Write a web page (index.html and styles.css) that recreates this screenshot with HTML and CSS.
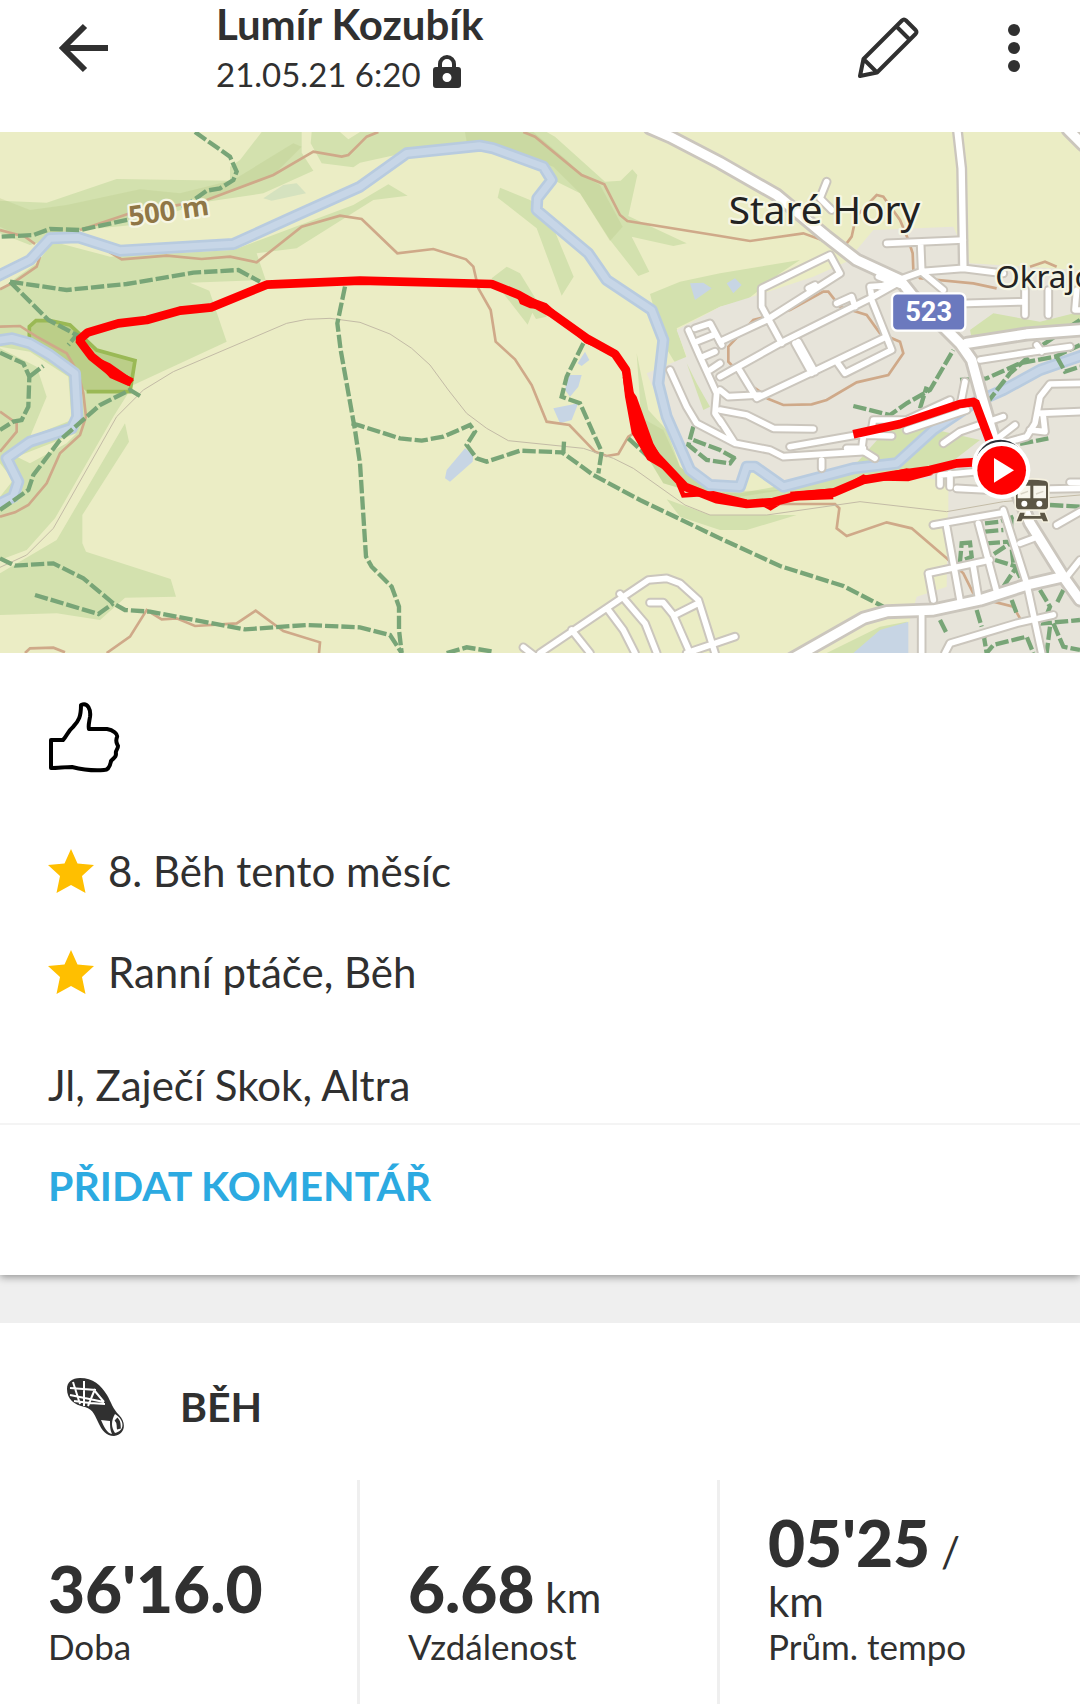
FILE: index.html
```
<!DOCTYPE html>
<html lang="cs">
<head>
    <meta charset="UTF-8">
    <meta name="viewport" content="width=device-width, initial-scale=1.0">
    <title>Lumír Kozubík - Běh</title>
    <link rel="stylesheet" href="styles.css">
</head>
<body>
    <header class="topbar">
        <button class="icon-button" type="button" aria-label="Zpět">
            <svg width="50" height="50" viewBox="0 0 50 50"><path d="M26 3 4 25l22 22M4 25h45" fill="none" stroke="#303030" stroke-width="6"/></svg>
        </button>
        <div class="title">
            <h1>Lumír Kozubík</h1>
            <p>
                21.05.21 6:20
                <svg width="28" height="33" viewBox="0 0 28 33"><path d="M7 14V9a7 7 0 0 1 14 0v5" fill="none" stroke="#303030" stroke-width="4"/><path fill="#303030" fill-rule="evenodd" d="M3 12h22a3 3 0 0 1 3 3v15a3 3 0 0 1-3 3H3a3 3 0 0 1-3-3V15a3 3 0 0 1 3-3zm11 6a4.500 4.500 0 1 0 0 9 4.500 4.500 0 0 0 0-9z"/></svg>
            </p>
        </div>
        <button class="icon-button edit" type="button" aria-label="Upravit">
            <svg width="62" height="62" viewBox="0 0 62 62" fill="none" stroke="#303030" stroke-width="4" stroke-linejoin="round"><path d="M3 59 6.500 42 45 3.500q2-2 4 0L58.500 13q2 2 0 4L20 55.500zM6.500 42 20 55.500M39.500 9.500 52.500 22.500"/></svg>
        </button>
        <button class="icon-button" type="button" aria-label="Další možnosti">
            <svg width="12" height="48" viewBox="0 0 12 48" fill="#303030"><circle cx="6" cy="6" r="6"/><circle cx="6" cy="24" r="6"/><circle cx="6" cy="42" r="6"/></svg>
        </button>
    </header>

    <main>
        <section class="card">
            <svg class="map" viewBox="0 6 3240 1563" role="img" aria-label="Mapa trasy">
                <defs>
                    <g id="roads-minor">
                        <path d="M2660 340 2890 330M2762 345 2765 420M2640 470 2765 425 2890 415 3010 430M2770 430 2830 480M2900 520 3075 515M3075 480V555M3145 480V555M3230 480 3225 540H3240M2480 155 2460 205 2495 240"/>
                        <path d="M2160 635 2300 570 2520 430 2490 375 2285 475 2285 530 2345 640M2160 740 2340 640 2620 500 2700 455M2425 475 2445 465M2615 510 2675 660 2535 730 2510 695M2385 640 2435 730M2395 635 2445 725M2215 715 2270 805 2440 725 2655 622M2510 520 2555 500 2565 530M2615 500 2610 470 2680 465M2635 440 2700 465"/>
                        <path d="M2065 600 2100 680 2150 790M2085 595 2130 580 2165 645M2090 635 2140 615M2110 680 2145 665M2130 720 2160 700M2010 720 2060 830 2090 880 2205 940 2310 960 2350 980 2590 965M2160 840 2240 855 2320 895 2440 897M2160 870 2205 940M2150 790 2145 850 2165 880M2160 780 2185 800 2280 795"/>
                        <path d="M2370 950 2570 915 2675 918M2590 920 2585 960 2625 985M2540 955H2590M2615 900 2620 870 2720 870 2850 810M2720 900 2900 840M2465 990V1015M2895 755 2880 830M2940 690 3100 665 3210 650M3110 645 3125 665M2830 940 2880 905 3010 860M2960 950 3045 885M3010 940 3080 920 3105 880 3120 800 3150 762 3240 760M3115 850 3240 845M3090 900 3135 905 3130 860M2820 1065 2820 1035 2930 1025M2850 1070V1030M2870 1075 2960 1080M3210 1057H3240M3150 1077 3240 1075M3170 1185 3240 1145"/>
                        <path d="M2800 1185 3000 1150M2840 1190 2880 1410M2935 1180 2990 1385M3010 1140 3080 1360 3125 1569M2800 1410 2785 1330 2970 1290M2920 1310 2935 1400M3060 1240 3100 1225M2765 1450V1569M2835 1569 2850 1540 3050 1480 3160 1455M3200 1340 3240 1290"/>
                        <path d="M1620 1569 1945 1350 2000 1345 2040 1360 2095 1410 2145 1569M1570 1552 1600 1575M1715 1500 1770 1569M1825 1440 1870 1500 1905 1569M1860 1392 1935 1480 1970 1569M1950 1418H1990L2020 1455 2070 1569M2025 1455 2095 1420M2060 1569 2205 1520"/>
                    </g>
                    <g id="roads-major">
                        <path d="M1950-6 2010 20 2160 98 2330 195 2480 320 2570 390 2700 450 2740 500 2880 640 2915 690 2945 800 2980 920 3090 1180 3190 1340 3240 1410M2900 640 3080 612 3240 600M2370 1590 2590 1465 2660 1445 2800 1440 2940 1410 3080 1365 3190 1340M3205 0 3250 45"/>
                    </g>
                    <path id="road-north" d="M2872 0 2885 115 2890 405"/>
                    <path id="river" d="M-10 440 90 390 150 325 235 322 360 362 700 342 870 265 1080 170 1220 70 1440 47 1480 55 1630 110 1655 150 1612 205 1610 240 1765 370 1820 450 1955 540 1990 630 1975 760 2000 860 2070 1020 2130 1065 2220 1070 2240 1010 2265 1010 2350 1070 2560 1015 2690 1000 2800 900 2920 820 3010 780 3120 720 3250 675M-10 632 35 625 90 640 150 675 225 730 232 860 215 895 90 935 20 985 55 1055 40 1100-10 1125"/>
                </defs>

                <rect y="0" width="3240" height="1575" fill="#ebedc5"/>

                <!-- forests -->
                <g fill="#d3e1ae">
                    <path d="M0 212 140 218 350 147 690 152 690 110 720 90 785 6H905V68L940 122 790 190 620 215 400 285 240 300 90 345 0 310z"/>
                    <path d="M935 6H1020L1045 28 1080 6H1640L1665 20 1815 155 1862 152 1897 118 1912 135 1885 258 2060 340 2020 348 1895 320 1948 425 1915 438 1830 330 1740 190 1660 150 1560 80 1440 40 1210 70 1080 98 1060 112 965 100 932 40z"/>
                    <path d="M0 478 110 400 160 335 330 380 700 360 940 270 1060 225 1165 163 1223 197 1120 210 890 355 770 370 797 450 570 458 628 482 680 635 400 765 340 860 165 1165 80 1260 0 1290z"/>
                    <path d="M375 880 387 935 247 1155V1240L258 1265 512 1347 528 1400 375 1403 300 1470 170 1450 0 1455V1330L170 1230z"/>
                    <path d="M1500 173 1590 210 1640 245 1721 440 1685 497 1610 295 1493 203zM1475 445 1520 410 1560 430 1640 560 1608 567 1597 548 1583 584z"/>
                    <path d="M1950 492 2040 455 2160 430 2400 390 2340 430 2240 510 2160 530 2030 595 2065 700 2130 820 2110 820 2020 690 1990 640z"/>
                    <path d="M1910 670 1945 840 2000 900 2040 1010 2130 1085 2220 1090 2640 1010 2650 940 2800 900 2940 950 2940 990 2600 1060 2350 1110 2160 1110 1990 1060 1930 960zM2000 1108 2130 1155 2390 1155 2240 1200 2160 1200 2040 1160z"/>
                    <path d="M2480 1569 2640 1490 2720 1475V1569z"/>
                </g>
                <g fill="#b9cc8b" fill-opacity=".35">
                    <path d="M0 205 90 240 200 225 420 178 540 190 700 150 880 40 905 50 820 135 620 210 240 300 60 318 0 290z"/>
                    <path d="M1395 6H1600L1700 90 1745 135 1800 165 1868 290 1830 333 1740 190 1660 110 1560 75 1400 35z"/>
                    <path d="M1900 850 1990 900 2040 1010 2130 1085 2350 1080 2160 1110 1990 1060 1930 960z"/>
                </g>
                <path d="M0 650 90 665 205 740 215 870 90 920 140 800 110 710 60 685 0 655zM0 1000 40 1050 0 1100zM50 980 230 910 200 940 90 1000z" fill="#ebedc5"/>

                <!-- built-up area -->
                <path d="M2030 600 2160 530 2290 490 2440 440 2540 395 2620 300 2860 290 2910 400 3240 420V1569H2700L2750 1400 2840 1370 2845 1050 2660 1040 2690 930 2560 1000 2350 1060 2250 1010 2220 1060 2130 1060 2040 960 1940 730 2060 680z" fill="#e7e4da"/>
                <g fill="#d3e1ae">
                    <path d="M2915 625 2910 600 2980 550 3120 575 3240 545V590L3080 600zM2330 1060 2640 990 2660 930 2810 900 2940 930 2850 1000 2580 1050zM2640 920 2800 830 2860 850 2700 990 2560 1010z"/>
                    <path d="M2060 700 2110 840 2130 830 2090 760z"/>
                </g>
                <path d="M2330 1115 2560 1060 2845 1050V1150L2580 1118z" fill="#ebedc5"/>
                <path d="M2560 1569 2640 1500 2725 1475V1569zM2070 460 2110 458 2135 475 2085 510zM2180 460 2205 445 2225 465 2200 490zM1755 665 1768 690 1745 708 1733 700zM1705 735 1745 735 1735 770 1710 800 1695 780zM1660 835 1735 820 1715 870 1680 880zM1395 955 1420 975 1418 995 1350 1055 1335 1045 1340 1020z" fill="#c7d5e4"/>
                <path d="M790 205 850 165 890 160 918 190 815 212z" fill="#c7dabb" fill-opacity=".6"/>
                <path d="M88 630V590L108 572H150L210 585 290 660 405 692 390 785H260" fill="#a4bb62" fill-opacity=".5" stroke="#9ab955" stroke-width="11"/>

                <!-- contour lines -->
                <g fill="none" stroke="#cfa989" stroke-width="8">
                    <path d="M0 300 75 320 105 342M120 380 110 410 45 455 0 478M240 300 390 250 620 210 820 135 940 65 1025 80 1045 75 1080 40 1100 20 1135 6"/>
                    <path d="M250 320 365 388 500 377 605 387 690 380 770 397 905 290 1020 257 1085 267 1192 370 1300 357 1398 388 1420 410 1435 475 1472 540 1487 635 1545 688 1595 765 1640 875 1708 885 1785 965 1820 978 1855 972 1885 920 1905 908"/>
                    <path d="M0 590 60 588 110 620 200 670 235 730 250 790 258 860 240 915 180 970 140 1060 85 1125 45 1147 0 1160M0 845 50 880V905L0 965M75 1569 90 1555 160 1553 195 1567M320 1569 390 1520 440 1440 485 1468 530 1465 585 1488 710 1480 767 1442 850 1503 960 1537 957 1569"/>
                    <path d="M1570 6 1605 20 1745 135 1813 163 1860 255 1882 273 2160 318 2250 333 2410 310 2480 335 2540 340 2555 320 2568 260 2630 195 2650 200 2700 270 2725 330 2738 370 2740 420 2760 445 2920 460 2990 475M3090 410 3135 395 3170 410"/>
                    <path d="M2295 795 2230 750 2210 720 2185 695V650L2260 570 2370 540 2470 485H2485L2520 530 2600 555 2640 610 2700 635 2710 670 2665 735 2570 757 2480 810 2435 823 2350 825 2300 805"/>
                    <path d="M2300 1122H2505L2518 1135 2510 1195 2540 1218 2660 1177 2735 1195 2840 1285 2890 1330 2920 1390M2980 1415 3040 1430 3060 1465M2840 1569 2870 1530 2960 1520"/>
                </g>

                <use href="#river" fill="none" stroke="#b8cbdf" stroke-width="36" stroke-linejoin="round"/>
                <use href="#river" fill="none" stroke="#c7d6e7" stroke-width="20" stroke-linejoin="round"/>
                <path d="M0 1312 80 1275 160 1195 350 860 430 780 520 725 860 580 920 568 990 565 1080 577 1170 612 1235 655 1290 705 1345 780 1400 850 1460 895 1525 932 1750 955 1840 985 1900 1015 2055 1125 2130 1155 2300 1155 2580 1115 2840 1145 3010 1115 3240 1095" fill="none" stroke="#c3bba6" stroke-width="3"/>

                <!-- forest paths -->
                <g fill="none" stroke="#78a577" stroke-width="13" stroke-dasharray="40 9">
                    <path d="M585 6 690 80 710 125 700 150 660 175 620 182 540 240M5 320 100 315 150 297 240 300 390 268M30 455 200 480 380 462 580 428 715 420 780 455M30 455 145 570 230 615 205 645M0 668 70 700 88 740 85 830 65 870 40 875 0 900M88 740 130 708"/>
                    <path d="M420 798 390 780 300 825 180 930 100 1035 85 1080 0 1140M1035 470 1012 580 1022 660 1065 900 1080 1000 1098 1280 1115 1310 1175 1370 1197 1430V1500L1205 1569"/>
                    <path d="M1055 880 1080 887 1200 925 1265 932 1330 920 1410 885 1425 905 1400 945 1430 985 1460 995 1560 962 1685 967M1692 935 1690 970 1780 1035 1920 1110 2160 1225 2340 1308 2530 1368 2650 1430M1750 640 1700 740 1685 800 1740 820 1805 965 1795 1030"/>
                    <path d="M0 1285 45 1307 160 1300 250 1345 340 1420 375 1440 450 1445 735 1498 920 1485 1080 1492 1170 1515 1205 1569M105 1395 295 1452 340 1420M1340 1569 1400 1552 1480 1565M1885 925 1950 985"/>
                    <path d="M2080 890 2065 945 2120 990 2190 1000 2205 980M2080 930 2160 960 2205 985M2560 828 2670 855 2720 820 2790 780 2860 660M2760 835 2780 770M2880 750 2960 745 3060 700 3165 680 3240 645M2960 820 3030 730 3120 650 3240 570M3170 680 3195 725 3240 710M3060 942 3145 925M3150 1125 3240 1130"/>
                    <path d="M2955 1180 3000 1175 3040 1160M2885 1240 2910 1238 2915 1280 2880 1295zM2955 1205 3010 1200M2960 1240 3030 1235M2985 1290 3050 1310 3010 1370M3035 1160 3030 1240 2970 1280M3030 1210 3040 1300 3065 1350M2820 1470 2840 1510M2930 1440 2945 1490M3035 1410 3050 1450M2950 1510 2960 1569 2980 1545 3080 1520 3100 1569M3120 1380 3150 1430 3130 1480 3240 1470M3190 1380 3170 1420M3160 1480 3190 1550 3240 1560M3150 1490 3140 1569M3180 1180 3210 1160"/>
                </g>

                <!-- roads, casing first -->
                <g fill="none" stroke="#cbc6bd" stroke-linecap="round" stroke-linejoin="round">
                    <use href="#roads-minor" stroke-width="29"/>
                    <use href="#road-north" stroke-width="33"/>
                    <use href="#roads-major" stroke-width="45"/>
                </g>
                <g fill="none" stroke="#fff" stroke-linecap="round" stroke-linejoin="round">
                    <use href="#roads-minor" stroke-width="17"/>
                    <use href="#road-north" stroke-width="19"/>
                    <use href="#roads-major" stroke-width="28"/>
                </g>

                <!-- labels -->
                <g class="map-label">
                    <text class="height" transform="translate(390 288) rotate(-8)">500 m</text>
                    <text class="town" x="2186" y="283">Staré Hory</text>
                    <text class="suburb" x="2986" y="473">Okrajová</text>
                </g>
                <rect x="2676" y="490" width="220" height="112" rx="16" fill="#6b79be" stroke="#fff" stroke-width="7"/>
                <text class="road-number" x="2786" y="573">523</text>

                <!-- station -->
                <g fill="#5c5645">
                    <path d="M3048 1064q0-10 10-12 38-6 76 0 10 2 10 12v64q0 10-10 10h-76q-10 0-10-10z" stroke="#f4f0df" stroke-width="10" paint-order="stroke"/>
                    <path d="M3060 1148h14l-2 10h50l-2-10h14l10 26h-14l-4-8h-58l-4 8h-14z" stroke="#f4f0df" stroke-width="8" paint-order="stroke"/>
                    <path d="M3053 1067h38v38h-38zM3100 1067h38v38h-38z" fill="#f8f6ec"/>
                    <path d="M3062 1092 3084 1084M3108 1092 3130 1084" stroke="#d8d4c6" stroke-width="4"/>
                    <circle cx="3073" cy="1121" r="9" fill="#fff"/><circle cx="3118" cy="1121" r="9" fill="#fff"/>
                </g>

                <!-- recorded track -->
                <g fill="none" stroke="#f00" stroke-width="26" stroke-linejoin="bevel">
                    <path d="M395 757 335 728 275 680 237 630 262 608 355 580 440 570 540 542 635 532 800 464 1080 452 1475 462 1555 494 1655 550 1760 625 1845 672 1878 720 1890 800 1920 910 1970 980 2055 1070 2150 1108 2240 1122 2320 1116 2390 1098 2500 1088 2590 1050 2680 1035 2790 1020 2870 1000 2950 995"/>
                    <path d="M2560 913 2700 882 2880 822 2925 815 2968 930"/>
                </g>
                <path d="M265 670 330 744 385 768 402 750 330 700zM350 572 440 563 540 530 640 525 650 538 540 552 450 577 350 587zM1545 485 1560 522 1590 535 1665 542 1640 520zM1690 580 1755 640 1840 672 1750 605zM1868 740 1875 800 1895 910 1942 990 2010 1030 1960 940 1910 800zM2290 1130 2312 1142 2340 1125zM2370 1085 2500 1075 2500 1108 2380 1112zM2560 1050 2590 1033 2640 1052 2725 1054 2800 1034 2720 1015z" fill="#f00"/>
                <path d="M2035 1060 2050 1096 2140 1090 2240 1115" fill="none" stroke="#f00" stroke-width="14"/>

                <circle cx="2998" cy="1006" r="82" fill="#fff"/>
                <circle cx="3001" cy="1003" r="74" fill="#2c3038"/>
                <circle cx="3005" cy="1021" r="86" fill="#fff"/>
                <circle cx="3005" cy="1021" r="73" fill="#f00"/>
                <path d="M2982 984v74l60-37z" fill="#fff"/>
            </svg>

            <div class="summary">
                <button class="like" type="button" aria-label="To se mi líbí">
                    <svg width="72" height="72" viewBox="0 0 72 72"><path d="M3 39h12c4-4 5-9 10-13 6-6 8-11 8-22 7-3 10 5 9 12-1 6-2 9-1 12h18c6 1 11 5 10 8-2 5 0 6 1 9 0 4-3 4-2 8 0 4-4 5-5 7-1 6-4 9-7 9-12 1-24-1-32-3-7 0-14 1-21 1z" fill="none" stroke="#000" stroke-width="4" stroke-linejoin="round"/></svg>
                </button>
                <ul class="awards">
                    <li>
                        <svg width="46" height="44" viewBox="0 0 46 44"><path d="M23 0l6.500 14.500L46 16 34 27l3.500 17L23 36 8.500 44 12 27 0 16l16.500-1.500z" fill="#ffbf00"/></svg>
                        8. Běh tento měsíc
                    </li>
                    <li>
                        <svg width="46" height="44" viewBox="0 0 46 44"><path d="M23 0l6.500 14.500L46 16 34 27l3.500 17L23 36 8.500 44 12 27 0 16l16.500-1.500z" fill="#ffbf00"/></svg>
                        Ranní ptáče, Běh
                    </li>
                </ul>
                <p class="note">Jl, Zaječí Skok, Altra</p>
            </div>
            <div class="comment">
                <button type="button">PŘIDAT KOMENTÁŘ</button>
            </div>
        </section>

        <section class="activity">
            <div class="activity-head">
                <svg width="60" height="60" viewBox="0 0 60 60">
                    <path d="M1 12C1 5 6 1 14 1c13 0 21 7 27 17 4 7 6 14 12 20 8 8 6 20-5 21-8 0-12-6-15-12-4-8-5-14-14-17C8 28 1 22 1 12z" fill="#303030"/>
                    <path d="M7 5l7 22M18 4v25M4 11l26 2M4 18l34 7M29 12l-7 17M28 13l10 12M8 24l16 2 15 1" fill="none" stroke="#fff" stroke-width="2"/>
                    <path d="M35 43l9 1c0 5 0 9 2 13-5-1-8-7-11-14zM49 37c10 6 10 17 0 19-4-6-4-12 0-19z" fill="#fff"/>
                    <path d="M50 42c4 4 2 6 3 10" fill="none" stroke="#303030" stroke-width="4"/>
                </svg>
                <h2>BĚH</h2>
            </div>
            <dl class="stats">
                <div class="stat">
                    <dd><strong>36'16.0</strong></dd>
                    <dt>Doba</dt>
                </div>
                <div class="stat">
                    <dd><strong>6.68</strong> km</dd>
                    <dt>Vzdálenost</dt>
                </div>
                <div class="stat">
                    <dd><strong>05'25</strong> / km</dd>
                    <dt>Prům. tempo</dt>
                </div>
            </dl>
        </section>
    </main>
</body>
</html>
```
FILE: styles.css
```
* {
    box-sizing: border-box;
}
body {
    margin: 0;
    min-height: 100vh;
    display: flex;
    flex-direction: column;
    font-family: Lato, "Open Sans", sans-serif;
    font-size: 42px;
    color: #303030;
    background-color: #efefef;
}
h1, h2, p, ul, dl, dd {
    margin: 0;
    padding: 0;
}
button {
    padding: 0;
    border: none;
    background: none;
    font-family: inherit;
    cursor: pointer;
}
svg {
    display: block;
    flex: none;
}
main {
    flex: 1;
    display: flex;
    flex-direction: column;
}
.topbar {
    position: relative;
    z-index: 1;
    display: flex;
    align-items: flex-start;
    height: 132px;
    padding: 0 60px 0 48px;
    background-color: #fff;
}
.icon-button {
    display: flex;
    align-items: center;
    justify-content: center;
    height: 96px;
    min-width: 72px;
}
.icon-button:last-child {
    min-width: 12px;
}
.edit {
    margin-right: 84px;
}
.title {
    flex: 1;
    margin-left: 96px;
}
.title h1 {
    font-size: 42px;
    line-height: 48px;
}
.title p {
    display: flex;
    align-items: center;
    gap: 12px;
    font-size: 33px;
    line-height: 52px;
}
.title svg {
    margin-bottom: 6px;
}
.card {
    background-color: #fff;
    box-shadow: 0 2px 8px rgba(0, 0, 0, 0.4);
}
.map {
    width: 100%;
    height: auto;
}
.map-label {
    font-family: "Noto Sans", sans-serif;
    fill: #222;
    stroke: #f6f6e4;
    stroke-width: 14px;
    stroke-linejoin: round;
    paint-order: stroke;
}
.height {
    font-size: 82px;
    font-weight: 700;
    fill: #8f7646;
}
.town {
    font-size: 116px;
}
.suburb {
    font-size: 94px;
}
.road-number {
    font-family: Roboto, sans-serif;
    font-size: 82px;
    font-weight: 700;
    text-anchor: middle;
    fill: #fff;
}
.summary {
    padding: 48px 48px 0;
}
.like {
    display: block;
    margin-bottom: 47px;
}
.awards {
    list-style: none;
}
.awards li {
    display: flex;
    align-items: center;
    gap: 14px;
    height: 101px;
}
.note {
    margin-top: 25px;
    line-height: 76px;
}
.comment {
    height: 152px;
    padding: 31px 48px;
    border-top: 2px solid #f4f4f4;
}
.comment button {
    font-size: 41px;
    font-weight: 700;
    line-height: 60px;
    color: #2caae1;
}
.activity {
    flex: 1;
    display: flex;
    flex-direction: column;
    margin-top: 48px;
    background-color: #fff;
}
.activity-head {
    display: flex;
    align-items: center;
    gap: 54px;
    height: 157px;
    padding: 10px 66px 0;
}
.activity-head h2 {
    font-size: 41px;
}
.stats {
    flex: 1;
    display: grid;
    grid-template-columns: repeat(3, 1fr);
}
.stat {
    display: flex;
    flex-direction: column;
    justify-content: flex-end;
    padding: 10px 48px 36px;
    border-right: 3px solid #efefef;
}
.stat:last-child {
    padding-right: 72px;
    border-right: none;
}
.stat dd {
    font-size: 42px;
    line-height: 46px;
}
.stat strong {
    font-size: 64px;
    font-weight: 900;
    line-height: 70px;
}
.stat dt {
    font-size: 35px;
    line-height: 44px;
}
```
